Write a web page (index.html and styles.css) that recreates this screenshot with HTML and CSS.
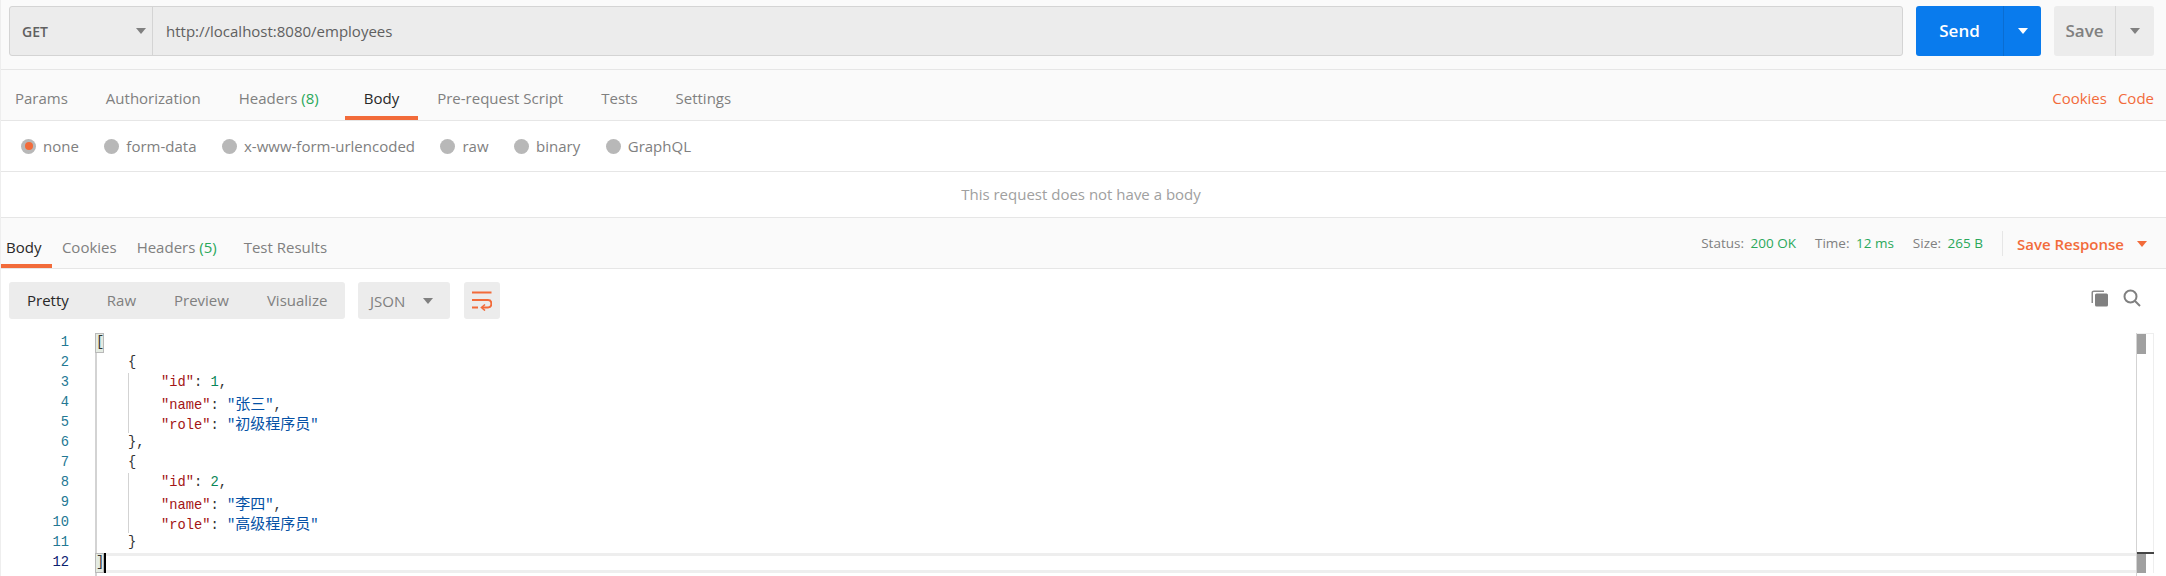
FILE: index.html
```html
<!DOCTYPE html>
<html lang="en">
<head>
<meta charset="utf-8">
<title>Postman request</title>
<link rel="stylesheet" href="styles.css">
</head>
<body>
<div class="page">
  <header class="urlbar">
    <div class="urlbox">
      <div class="method"><span>GET</span><i class="tri tri-grey"></i></div>
      <div class="url">http://localhost:8080/employees</div>
    </div>
    <div class="send"><span class="send-label">Send</span><span class="send-more"><i class="tri tri-white"></i></span></div>
    <div class="save"><span class="save-label">Save</span><span class="save-more"><i class="tri tri-grey"></i></span></div>
  </header>

  <nav class="tabs req-tabs">
    <span class="tab">Params</span>
    <span class="tab">Authorization</span>
    <span class="tab">Headers <em>(8)</em></span>
    <span class="tab active">Body</span>
    <span class="tab">Pre-request Script</span>
    <span class="tab">Tests</span>
    <span class="tab">Settings</span>
    <span class="tab-links"><a>Cookies</a><a>Code</a></span>
  </nav>

  <div class="radios">
    <label class="radio"><i class="dot on"></i>none</label>
    <label class="radio"><i class="dot"></i>form-data</label>
    <label class="radio"><i class="dot"></i>x-www-form-urlencoded</label>
    <label class="radio"><i class="dot"></i>raw</label>
    <label class="radio"><i class="dot"></i>binary</label>
    <label class="radio"><i class="dot"></i>GraphQL</label>
  </div>

  <div class="nobody">This request does not have a body</div>

  <nav class="tabs res-tabs">
    <span class="tab active">Body</span>
    <span class="tab">Cookies</span>
    <span class="tab">Headers <em>(5)</em></span>
    <span class="tab">Test Results</span>
    <div class="stats">
      <span class="stat">Status: <b>200 OK</b></span>
      <span class="stat">Time: <b>12 ms</b></span>
      <span class="stat">Size: <b>265 B</b></span>
      <span class="save-res">Save Response<i class="tri tri-orange"></i></span>
    </div>
  </nav>

  <div class="toolbar">
    <div class="modes">
      <span class="mode current">Pretty</span>
      <span class="mode">Raw</span>
      <span class="mode">Preview</span>
      <span class="mode">Visualize</span>
    </div>
    <div class="lang"><span>JSON</span><i class="tri tri-grey"></i></div>
    <div class="wrap">
      <svg width="20" height="20" viewBox="0 0 20 20" fill="none" stroke="#f26b3a" stroke-width="2">
        <path d="M0 1.500H19.500"/>
        <path d="M0 9H16C20.500 9 20.500 16.500 16 16.500H10"/>
        <path d="M0 16.500H6"/>
        <path d="M13 13.500L9.500 16.500L13 19.500" stroke-width="1.600"/>
      </svg>
    </div>
    <div class="tools">
      <svg width="18" height="18" viewBox="0 0 18 18">
        <path d="M3 1.500H13V3H3C2.400 3 2 3.400 2 4V14H0.500V3.500C0.500 2.400 1.500 1.500 3 1.500Z" fill="#8a8a8a"/>
        <rect x="4" y="4.500" width="13" height="13" rx="1.500" fill="#808080"/>
      </svg>
      <svg width="18" height="18" viewBox="0 0 18 18" fill="none" stroke="#808080" stroke-width="2">
        <circle cx="7.500" cy="7.500" r="6"/>
        <path d="M12 12L17 17"/>
      </svg>
    </div>
  </div>

  <div class="editor">
    <ol class="gutter">
      <li>1</li><li>2</li><li>3</li><li>4</li><li>5</li><li>6</li><li>7</li><li>8</li><li>9</li><li>10</li><li>11</li><li class="cur">12</li>
    </ol>
    <div class="code">
      <div class="line"><span class="match">[</span></div>
      <div class="line"><i class="ind"></i>{</div>
      <div class="line"><i class="ind"></i><i class="ind guide"></i><span class="k">"id"</span>: <span class="n">1</span>,</div>
      <div class="line"><i class="ind"></i><i class="ind guide"></i><span class="k">"name"</span>: <span class="s">"<span class="cjk">张三</span>"</span>,</div>
      <div class="line"><i class="ind"></i><i class="ind guide"></i><span class="k">"role"</span>: <span class="s">"<span class="cjk">初级程序员</span>"</span></div>
      <div class="line"><i class="ind"></i>},</div>
      <div class="line"><i class="ind"></i>{</div>
      <div class="line"><i class="ind"></i><i class="ind guide"></i><span class="k">"id"</span>: <span class="n">2</span>,</div>
      <div class="line"><i class="ind"></i><i class="ind guide"></i><span class="k">"name"</span>: <span class="s">"<span class="cjk">李四</span>"</span>,</div>
      <div class="line"><i class="ind"></i><i class="ind guide"></i><span class="k">"role"</span>: <span class="s">"<span class="cjk">高级程序员</span>"</span></div>
      <div class="line"><i class="ind"></i>}</div>
      <div class="line last"><span class="match">]</span><i class="caret"></i></div>
    </div>
    <div class="track">
      <i class="thumb thumb-top"></i>
      <i class="thumb thumb-bottom"></i>
    </div>
  </div>
</div>
</body>
</html>
```

FILE: styles.css
```css
* { box-sizing: border-box; }
html, body { margin: 0; padding: 0; }
body {
  width: 2166px;
  height: 576px;
  overflow: hidden;
  background: #fff;
  font-family: "Open Sans", "Noto Sans", sans-serif;
  font-size: 15px;
  color: #808080;
}
.page { height: 576px; border-left: 1px solid #eee; display: flex; flex-direction: column; }
em { font-style: normal; color: #2aa85a; margin-right: 7px; }
.tri { display: inline-block; width: 0; height: 0; border-left: 5px solid transparent; border-right: 5px solid transparent; border-top: 6px solid #808080; }
.tri-white { border-top-color: #fff; }
.tri-orange { border-top-color: #f26b3a; }

.urlbar { height: 70px; flex: none; display: flex; align-items: flex-start; padding: 6px 12px 0 8px; background: #fafafa; border-bottom: 1px solid #e6e6e6; }
.urlbox { width: 1894px; height: 50px; display: flex; background: #ececec; border: 1px solid #d4d4d4; border-radius: 3px; }
.method { width: 143px; flex: none; display: flex; align-items: center; justify-content: space-between; padding: 0 6px 0 12px; border-right: 1px solid #d4d4d4; font-size: 14px; font-weight: 600; color: #606060; }
.url { padding-left: 13px; line-height: 48px; color: #606060; }
.send { margin-left: 13px; width: 125px; height: 50px; display: flex; background: #097bed; border-radius: 3px; color: #fff; font-size: 17px; font-weight: 600; }
.send-label { width: 87px; text-align: center; line-height: 50px; }
.send-more { flex: 1; display: flex; align-items: center; justify-content: center; border-left: 1px solid #0a6dd2; }
.save { margin-left: 13px; width: 100px; height: 50px; display: flex; background: #ececec; border-radius: 3px; color: #808080; font-size: 17px; font-weight: 600; }
.save-label { width: 61px; text-align: center; line-height: 50px; }
.save-more { flex: 1; display: flex; align-items: center; justify-content: center; border-left: 1px solid #d8d8d8; }

.tabs { flex: none; display: flex; background: #fafafa; border-bottom: 1px solid #e6e6e6; }
.tab { display: block; height: 50px; white-space: pre; border-bottom: 4px solid transparent; }
.tab.active { color: #282828; border-bottom-color: #f26b3a; }
.req-tabs { height: 51px; }
.req-tabs .tab { padding: 0 19px; line-height: 56px; }
.req-tabs .tab:first-child { padding-left: 14px; }
.tab-links { margin-left: auto; display: flex; gap: 11px; padding-right: 12px; line-height: 56px; color: #f26b3a; }

.radios { flex: none; height: 51px; display: flex; align-items: center; padding-left: 20px; gap: 25.500px; border-bottom: 1px solid #e6e6e6; }
.radio { display: flex; align-items: center; gap: 7px; }
.dot { width: 15px; height: 15px; border-radius: 50%; background: #b8b8b8; display: flex; align-items: center; justify-content: center; }
.dot.on::after { content: ""; width: 8px; height: 8px; border-radius: 50%; background: #f26b3a; }

.nobody { flex: none; height: 46px; padding-right: 5px; line-height: 45px; text-align: center; color: #a0a0a0; border-bottom: 1px solid #e6e6e6; }

.res-tabs { height: 51px; }
.res-tabs .tab { padding: 0 10px; line-height: 58px; }
.res-tabs .tab:first-child { padding: 0 10.500px 0 5px; }
.stats { margin-left: auto; display: flex; align-items: flex-start; padding-top: 13px; padding-right: 19px; font-size: 13.500px; color: #808080; }
.stat { margin-right: 19px; line-height: 25px; white-space: pre; }
.stat b { font-weight: 400; color: #2aa85a; margin-left: 3px; }
.save-res { display: flex; align-items: center; gap: 13px; height: 25px; padding-left: 14px; border-left: 1px solid #e6e6e6; font-size: 15px; font-weight: 600; color: #f26b3a; }

.toolbar { flex: none; height: 64px; display: flex; align-items: flex-start; padding: 13px 25px 0 8px; }
.modes { width: 336px; height: 37px; display: flex; background: #ececec; border-radius: 3px; padding-left: 18px; line-height: 37px; }
.mode { margin-right: 38px; }
.mode.current { color: #282828; }
.lang { margin-left: 13px; width: 92px; height: 37px; display: flex; align-items: center; justify-content: space-between; padding: 0 17px 0 12px; background: #ececec; border-radius: 3px; }
.wrap { margin-left: 14px; width: 36px; height: 37px; padding: 9px 0 0 8px; background: #ececec; border-radius: 3px; }
.tools { margin-left: auto; display: flex; gap: 14px; padding-top: 7px; }

.editor { flex: 1; position: relative; display: flex; font-family: "Liberation Mono", "Noto Sans CJK SC", monospace; font-size: 13.750px; }
.gutter { flex: none; width: 94px; margin: 0; padding: 0 26px 0 0; list-style: none; text-align: right; color: #237893; line-height: 20px; }
.gutter li { height: 20px; }
.gutter .cur { color: #0b216f; }
.code { flex: none; width: 2042px; border-right: 1px solid #d3d3d3; color: #333; background: linear-gradient(#d3d3d3, #d3d3d3) 0 0 / 2px 100% no-repeat; }
.line { display: block; height: 20px; line-height: 20px; white-space: pre; }
.ind { display: inline-block; width: 33px; height: 20px; vertical-align: top; }
.guide { border-left: 1px solid #d3d3d3; }
.k { color: #a31515; }
.n { color: #098658; }
.s { color: #0451a5; }
.cjk { font-family: "Noto Sans CJK SC", sans-serif; font-size: 15px; line-height: 20px; }
.match { display: inline-block; width: 9px; height: 20px; background: #e4ebe2; border: 1px solid #b9b9b9; line-height: 18px; vertical-align: top; }
.last { box-shadow: inset 0 3px 0 #eee, inset 0 -3px 0 #eee; }
.caret { display: inline-block; width: 2px; height: 20px; background: #000; vertical-align: top; }
.track { position: absolute; left: 2136px; top: 0; width: 17px; height: 240px; border-top: 1px solid #eee; border-right: 1px solid #eee; }
.thumb { position: absolute; left: 0; width: 9px; height: 20px; background: #a0a0a0; }
.thumb-top { top: 0; }
.thumb-bottom { top: 219px; }
.track::after { content: ""; position: absolute; left: 0; top: 218px; width: 17px; height: 2px; background: #444; }
```
